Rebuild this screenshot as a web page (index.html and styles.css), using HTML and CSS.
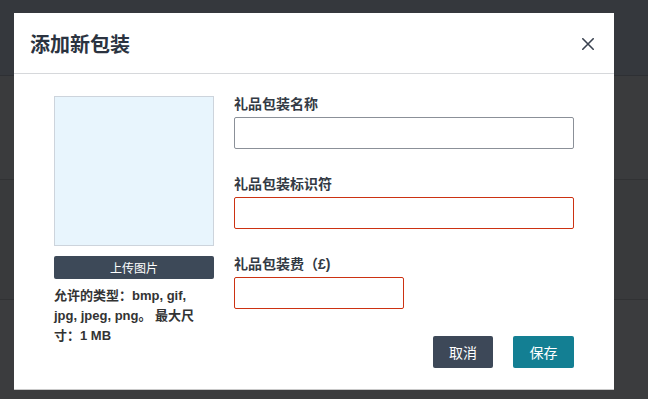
FILE: index.html
```html
<!DOCTYPE html>
<html lang="zh-CN">
<head>
<meta charset="utf-8">
<title>添加新包装</title>
<link rel="stylesheet" href="styles.css">
</head>
<body>
<div class="backdrop">
  <div class="band band-top"></div>
  <div class="band band-2"></div>
  <div class="band band-3"></div>
  <div class="band band-4"></div>
</div>
<div class="modal">
  <div class="modal-header">
    <h1 class="modal-title">添加新包装</h1>
    <button class="close-btn" aria-label="关闭">
      <svg width="12" height="12" viewBox="0 0 12 12"><path d="M0.8 0.8 L11.2 11.2 M11.2 0.8 L0.8 11.2" stroke="#3a4250" stroke-width="1.6" fill="none" stroke-linecap="round"/></svg>
    </button>
  </div>
  <div class="modal-body">
    <div class="left-col">
      <div class="preview"></div>
      <button class="upload-btn">上传图片</button>
      <p class="help">允许的类型：bmp, gif,<br>jpg, jpeg, png。 最大尺<br>寸：1 MB</p>
    </div>
    <div class="right-col">
      <div class="field">
        <label class="label">礼品包装名称</label>
        <input class="input" type="text">
      </div>
      <div class="field">
        <label class="label">礼品包装标识符</label>
        <input class="input input-error" type="text">
      </div>
      <div class="field">
        <label class="label">礼品包装费（£)</label>
        <input class="input input-error input-short" type="text">
      </div>
      <div class="actions">
        <button class="btn btn-cancel">取消</button>
        <button class="btn btn-save">保存</button>
      </div>
    </div>
  </div>
</div>
</body>
</html>
```

FILE: styles.css
```css
* { box-sizing: border-box; }
html, body {
  margin: 0;
  padding: 0;
  width: 648px;
  height: 399px;
  overflow: hidden;
  background: #3a3b3d;
  font-family: "Liberation Sans", "Noto Sans CJK SC", sans-serif;
}
.backdrop {
  display: flex;
  flex-direction: column;
  height: 399px;
}
.band { flex: none; }
.band-top { height: 76px; background: #35383d; border-bottom: 1px solid #2e3034; }
.band-2 { height: 104px; background: #3a3b3d; border-bottom: 1px solid #313234; }
.band-3 { height: 120px; background: #393a3c; border-bottom: 1px solid #313234; }
.band-4 { flex: 1; background: #3b3c3e; }

.modal {
  position: absolute;
  left: 14px;
  top: 13px;
  width: 600px;
  height: 377px;
  background: #fff;
  border-bottom: 1px solid #c9c9c9;
  display: flex;
  flex-direction: column;
}
.modal-header {
  height: 61px;
  flex: none;
  display: flex;
  align-items: center;
  justify-content: space-between;
  padding: 0 20px 0 16px;
  border-bottom: 1px solid #d6d8db;
}
.modal-title {
  margin: 0;
  font-family: "Noto Sans CJK SC", sans-serif;
  font-size: 20px;
  font-weight: 700;
  color: #2b3340;
  line-height: 28px;
  padding-top: 1px;
}
.close-btn {
  border: 0;
  background: none;
  padding: 0;
  width: 12px;
  height: 12px;
  display: flex;
  margin-top: 1px;
}
.modal-body {
  display: flex;
  gap: 20px;
  padding: 22px 40px 0 40px;
}
.left-col {
  width: 160px;
  flex: none;
  display: flex;
  flex-direction: column;
}
.preview {
  height: 150px;
  background: #e8f5fd;
  border: 1px solid #cdd4dc;
}
.upload-btn {
  margin-top: 10px;
  height: 23px;
  border: 0;
  border-radius: 2px;
  background: #3d4958;
  color: #fff;
  font-family: "Noto Sans CJK SC", sans-serif;
  font-size: 12px;
  line-height: 23px;
  padding: 0;
}
.help {
  margin: 7px 0 0 0;
  font-size: 13px;
  font-weight: 700;
  line-height: 20px;
  color: #333;
  white-space: nowrap;
}
.right-col {
  width: 340px;
  display: flex;
  flex-direction: column;
  margin-top: -1px;
}
.field {
  display: flex;
  flex-direction: column;
  margin-bottom: 26px;
}
.label {
  font-size: 14px;
  font-weight: 700;
  line-height: 18px;
  color: #333a44;
  margin-bottom: 4px;
}
.input {
  height: 32px;
  width: 340px;
  border: 1px solid #8b9098;
  border-radius: 2px;
  background: #fff;
  padding: 0 8px;
  font-size: 13px;
  outline: none;
}
.input-error { border-color: #cc3212; }
.input-short { width: 170px; }
.actions {
  display: flex;
  justify-content: flex-end;
  gap: 20px;
  margin-top: 1px;
}
.btn {
  width: 61px;
  height: 32px;
  border: 0;
  border-radius: 2px;
  color: #fff;
  font-family: "Noto Sans CJK SC", sans-serif;
  font-size: 14px;
  padding: 0;
}
.btn-cancel { background: #3d4858; width: 60px; }
.btn-save { background: #137f93; }
```
